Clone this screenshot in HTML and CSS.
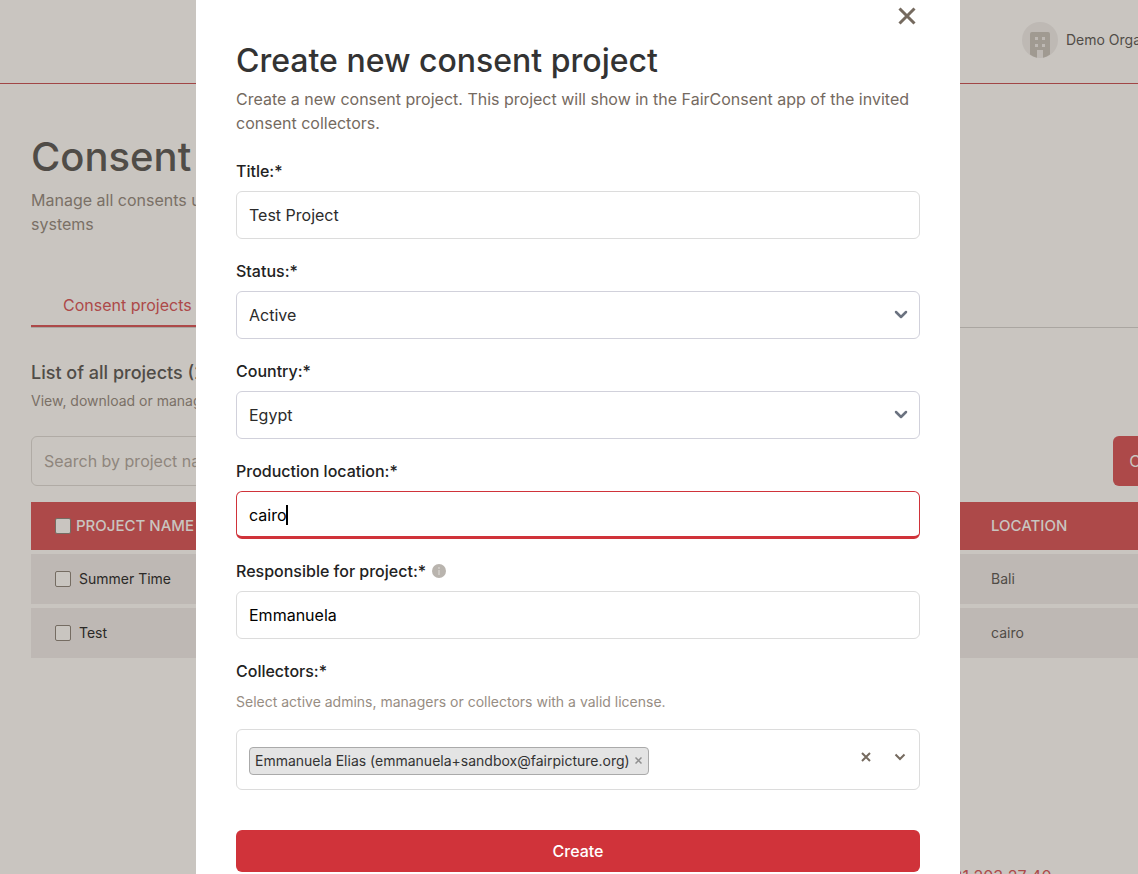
FILE: index.html
```html
<!DOCTYPE html>
<html lang="en">
  <head>
    <title>Consent projects</title>
    <meta charset="utf-8">
    <meta name="viewport" content="width=device-width, initial-scale=1">
    <link rel="stylesheet" href="styles.css">
  </head>
  <body>
    <div class="page">
      <header class="topbar">
        <div class="org">
          <svg class="org-avatar" width="36" height="36" viewBox="0 0 36 36" aria-hidden="true">
            <circle cx="18" cy="18" r="18" fill="#beb9b4"/>
            <path fill="#a09a91" d="M8 12a2 2 0 0 1 2-2h16a2 2 0 0 1 2 2v20.500a18 18 0 0 1-7 3.200V28h-6v7.700a18 18 0 0 1-7-3.200z"/>
            <path fill="#beb9b4" d="M13 15h3v3h-3zM20 15h3v3h-3zM13 22h3v3h-3zM20 22h3v3h-3z"/>
          </svg>
          <span>Demo Organisation</span>
        </div>
      </header>

      <main class="content">
        <h1>Consent</h1>
        <p class="lead">Manage all consents used by your teams and systems</p>

        <nav class="tabs">
          <a class="tab" href="#projects">Consent projects</a>
        </nav>

        <h2>List of all projects (2)</h2>
        <p class="hint">View, download or manage your projects</p>

        <div class="toolbar">
          <input class="search" type="text" placeholder="Search by project name" aria-label="Search by project name">
          <button class="btn-new" type="button">Create project</button>
        </div>

        <table class="projects">
          <thead>
            <tr>
              <th class="col-name"><label><input type="checkbox"> PROJECT NAME</label></th>
              <th>LOCATION</th>
            </tr>
          </thead>
          <tbody>
            <tr>
              <td class="name"><label><input type="checkbox">Summer Time</label></td>
              <td>Bali</td>
            </tr>
            <tr>
              <td class="name"><label><input type="checkbox">Test</label></td>
              <td>cairo</td>
            </tr>
          </tbody>
        </table>
      </main>

      <footer class="footer"><a href="#phone">+41 31 203 27 40</a></footer>
    </div>

    <div class="overlay">
      <form class="modal" role="dialog" aria-labelledby="modal-title">
        <button class="close" type="button" aria-label="Close">
          <svg width="18" height="18" viewBox="0 0 18 18"><path d="M1.500 1.500l15 15M16.500 1.500l-15 15" stroke="#756a5f" stroke-width="3"/></svg>
        </button>
        <h2 id="modal-title">Create new consent project</h2>
        <p class="intro">Create a new consent project. This project will show in the FairConsent app of the invited consent collectors.</p>

        <div class="field">
          <label for="title">Title:*</label>
          <input id="title" type="text" value="Test Project">
        </div>
        <div class="field">
          <label for="status">Status:*</label>
          <select id="status"><option>Active</option><option>Inactive</option></select>
          <svg class="chevron" width="14" height="9" viewBox="0 0 14 9"><path d="M2 2l5 5 5-5"/></svg>
        </div>
        <div class="field">
          <label for="country">Country:*</label>
          <select id="country"><option>Egypt</option></select>
          <svg class="chevron" width="14" height="9" viewBox="0 0 14 9"><path d="M2 2l5 5 5-5"/></svg>
        </div>
        <div class="field">
          <label for="location">Production location:*</label>
          <input id="location" class="active" type="text" value="cairo">
          <span class="caret"></span>
        </div>
        <div class="field">
          <label for="responsible">Responsible for project:*
            <svg class="info" width="14" height="14" viewBox="0 0 14 14"><circle cx="7" cy="7" r="7" fill="#b9b4ae"/><path d="M7 3v2M7 6v5" stroke="#d3cfcb" stroke-width="1.500"/></svg>
          </label>
          <input id="responsible" class="dark" type="text" value="Emmanuela">
        </div>
        <div class="field">
          <label for="collectors">Collectors:*</label>
          <p class="help">Select active admins, managers or collectors with a valid license.</p>
          <div class="multi">
            <span class="tag">Emmanuela Elias (emmanuela+sandbox@fairpicture.org)
              <button type="button" aria-label="Remove"><svg width="7" height="7" viewBox="0 0 7 7"><path d="M.5.5l6 6M6.500.5l-6 6" stroke="#8f8f8f" stroke-width="1.500"/></svg></button>
            </span>
            <input id="collectors" class="multi-input" type="text">
            <button class="clear" type="button" aria-label="Clear"><svg width="10" height="10" viewBox="0 0 10 10"><path d="M1 1l8 8M9 1l-8 8"/></svg></button>
            <button class="open" type="button" aria-label="Open"><svg width="12" height="8" viewBox="0 0 12 8"><path d="M1.500 1.500l4.500 4.500 4.500-4.500"/></svg></button>
          </div>
        </div>

        <button class="submit" type="submit">Create</button>
      </form>
    </div>
  </body>
</html>
```

FILE: styles.css
```css
* {
  box-sizing: border-box;
}

html, body {
  height: 100%;
}

body {
  margin: 0;
  overflow: hidden;
  font-family: Inter, "Liberation Sans", sans-serif;
  font-size: 16px;
  line-height: 24px;
  color: #504c47;
  background: #c9c5c0;
}

h1, h2, p {
  margin: 0;
}

input, select, button {
  font: inherit;
}

button {
  padding: 0;
  border: 0;
  background: none;
  cursor: pointer;
}

/* page behind the dialog */
.page {
  display: flex;
  flex-direction: column;
  min-width: 1280px;
}

.topbar {
  display: flex;
  height: 84px;
  padding: 22px 31px 0;
  border-bottom: 1px solid #a14646;
}

.org {
  display: flex;
  gap: 8px;
  width: 227px;
  height: 36px;
  margin-left: auto;
  align-items: center;
  font-size: 14px;
}

.content {
  padding: 48px 27px 0 31px;
}

.content h1 {
  font-size: 40px;
  line-height: 50px;
  font-weight: 500;
}

.lead {
  max-width: 360px;
  margin-top: 6px;
  color: #7a7066;
}

.tabs {
  display: flex;
  height: 52px;
  margin-top: 40px;
  border-bottom: 1px solid #aaa6a1;
}

.tab {
  height: 51px;
  padding: 17px 32px 0;
  border-bottom: 2px solid #ad4949;
  color: #ad4949;
  text-decoration: none;
}

.content h2 {
  margin-top: 32px;
  font-size: 18px;
  line-height: 26px;
  font-weight: 500;
}

.hint {
  margin-top: 3px;
  font-size: 14px;
  color: #7a7066;
}

.toolbar {
  display: flex;
  justify-content: space-between;
  margin-top: 23px;
}

.search {
  width: 320px;
  height: 50px;
  padding: 0 12px;
  border: 1px solid #b0aba5;
  border-radius: 6px;
  background: transparent;
}

.search::placeholder {
  color: #8f867d;
}

.btn-new {
  width: 140px;
  height: 50px;
  border-radius: 6px;
  background: #ad4949;
  color: #c9c5c0;
}

.projects {
  width: 100%;
  margin-top: 12px;
  border-spacing: 0 4px;
  table-layout: fixed;
}

.projects th {
  height: 48px;
  padding: 0 24px;
  background: #ad4949;
  color: #c9c5c0;
  font-size: 15px;
  font-weight: 500;
  text-align: left;
}

.projects .col-name {
  width: 936px;
}

.projects td {
  height: 50px;
  padding: 0 24px;
  background: #beb8b4;
  font-size: 14px;
}

.projects label {
  display: flex;
  align-items: center;
  gap: 8px;
}

.projects th label {
  gap: 5px;
}

.projects .name {
  color: #2b2927;
}

.projects input {
  appearance: none;
  width: 16px;
  height: 16px;
  margin: 0;
  border: 1px solid #756c62;
  border-radius: 2px;
  background: #c9c5c0;
}

.footer {
  margin-top: 202px;
  padding-left: 921px;
}

.footer a {
  color: #ad4949;
  text-decoration: none;
}

/* dialog */
.overlay {
  position: fixed;
  inset: 0;
  display: flex;
  padding: 0 178px 0 196px;
  overflow: hidden;
}

.modal {
  position: relative;
  flex: 1;
  height: max-content;
  min-height: 100%;
  padding: 40px;
  background: #fff;
}

.close {
  position: absolute;
  top: 7px;
  right: 44px;
  width: 18px;
  height: 18px;
}

.close svg {
  display: block;
}

.modal h2 {
  font-size: 32px;
  line-height: 42px;
  font-weight: 500;
  color: #333;
}

.intro {
  margin: 5px 0 24px;
  color: #756a5f;
}

.field {
  position: relative;
  margin-top: 20px;
}

.field label {
  display: flex;
  align-items: center;
  gap: 6px;
  margin-bottom: 8px;
  font-weight: 500;
  color: #222;
}

.field > input,
.field > select {
  display: block;
  appearance: none;
  width: 100%;
  height: 48px;
  padding: 0 12px;
  border: 1px solid #dcdcdc;
  border-radius: 6px;
  outline: none;
  background: #fff;
  color: #2b2b2b;
}

.field > select {
  border-color: #d1d1db;
}

.field > input.active {
  padding-top: 2px;
  border-color: #d0333a;
  border-bottom-width: 3px;
  color: #000;
  caret-color: transparent;
}

.field > input.dark {
  color: #000;
}

.caret {
  position: absolute;
  left: 50px;
  bottom: 14px;
  width: 2px;
  height: 20px;
  background: #000;
}

.chevron {
  position: absolute;
  right: 12px;
  bottom: 20px;
  fill: none;
  stroke: #6b7280;
  stroke-width: 2.5;
  stroke-linecap: round;
  stroke-linejoin: round;
  pointer-events: none;
}

.help {
  font-size: 14px;
  line-height: 22px;
  color: #978d83;
}

.multi {
  display: flex;
  align-items: center;
  height: 61px;
  margin-top: 16px;
  padding: 2px 13px 0 12px;
  border: 1px solid #dcdcdc;
  border-radius: 6px;
}

.tag {
  display: flex;
  align-items: center;
  gap: 5px;
  height: 28px;
  padding: 0 6px 0 5px;
  border: 1px solid #aaa;
  border-radius: 4px;
  background: #e4e4e4;
  font-size: 14px;
  color: #333;
}

.tag button,
.clear,
.open {
  display: flex;
}

.multi-input {
  flex: 1;
  min-width: 0;
  border: 0;
  outline: none;
  background: none;
}

.clear,
.open {
  padding-bottom: 8px;
}

.clear {
  margin-right: 23px;
}

.clear svg,
.open svg {
  fill: none;
  stroke: #756a5f;
  stroke-width: 2;
}

.submit {
  width: 100%;
  height: 42px;
  margin-top: 40px;
  border-radius: 6px;
  background: #d0333a;
  color: #fff;
  font-weight: 500;
}
```
